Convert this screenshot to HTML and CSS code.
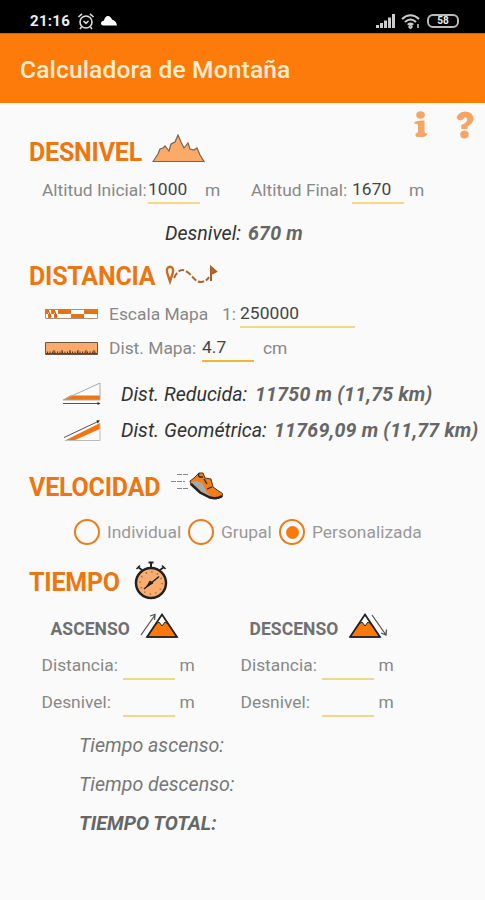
FILE: index.html
```html
<!DOCTYPE html>
<html lang="es">
<head>
    <meta charset="UTF-8">
    <title>Calculadora de Montaña</title>
    <link rel="stylesheet" href="styles.css">
</head>
<body>

<div class="statusbar">
    <span class="clock">21:16</span>
    <svg class="alarm" width="18" height="18" viewBox="0 0 18 18" fill="none" stroke="#ddd" stroke-width="1.6">
        <circle cx="9" cy="10" r="6"/>
        <path d="M1.5 5L5 1.8M16.500 5L13 1.800M6.500 9L9 11.300L11.500 9M4.500 15L3 17M13.500 15L15 17"/>
    </svg>
    <svg class="cloud" width="16" height="10" viewBox="0 0 16 10" fill="#fff">
        <path d="M2.500 9.500Q0 9.500 0 7.500Q0 5 3 4.500Q4 0 7 0Q9.500 0 11 3.500Q15.500 5 16 9.500Z"/>
    </svg>
    <svg class="signal" width="20" height="14" viewBox="0 0 20 14" fill="#ccc">
        <path d="M0 11h3v3H0zM4 9h3v5H4zM8 6.500h3V14H8zM12 3.500h3V14h-3zM16 0h3v14h-3z"/>
    </svg>
    <svg class="wifi" width="20" height="15" viewBox="0 0 20 15" fill="none" stroke="#ccc" stroke-width="2">
        <path d="M1 5Q9.500 -2.500 18 5M4 8Q9.500 3 15 8M6.700 10.800Q9.500 8.500 12.300 10.800"/>
        <path d="M9.500 11L11 13L9.500 14.500L8 13Z M17 10v4" stroke-width="1.500"/>
    </svg>
    <span class="battery">58</span>
</div>

<header class="appbar">Calculadora de Montaña</header>

<main>
    <div class="top">
        <h2 class="w-desnivel">DESNIVEL</h2>
        <svg class="ico-range" width="54" height="29" viewBox="0 0 54 29">
            <path d="M1 27.500L6 20L8 15L11 14L13 12L17 17L19 10L23 8L26 1L29 8L32 14L36 9L38 15L42 16L45 14L48 21L52 27.500Z" fill="#fbaa68" stroke="#776450" stroke-width="1.200"/>
        </svg>
        <div class="actions">
            <svg width="14" height="27" viewBox="0 0 14 27" fill="#f7a564">
                <ellipse cx="6.500" cy="4" rx="4.300" ry="3.700"/>
                <path d="M0.500 11Q4 9 10.500 9.500V21Q11 23 13.500 22Q13 26 8 26H3Q1 25.500 1.500 23L4 21V14Q3 12 0.500 13Z"/>
            </svg>
            <svg width="18" height="28" viewBox="0 0 17 28" fill="#f7a564" preserveAspectRatio="none">
                <path d="M0.500 7Q2 0.500 9 0.500Q16.500 1 16.500 8Q16 13 11 15.500V18H5V14Q11 11.500 10.500 8Q9 4.500 6.500 8.500Q3 10.500 0.500 7Z"/>
                <circle cx="8" cy="23.500" r="4"/>
            </svg>
        </div>
    </div>

    <div class="row altitude">
        <span class="label l-inicial">Altitud Inicial:</span>
        <span class="field">1000</span>
        <span class="unit u-first">m</span>
        <span class="label l-final">Altitud Final:</span>
        <span class="field">1670</span>
        <span class="unit">m</span>
    </div>
    <div class="row result r-desnivel"><span class="name">Desnivel:</span><b>670 m</b></div>

    <div class="heading h-distancia">
        <h2 class="w-distancia">DISTANCIA</h2>
        <svg width="54" height="20" viewBox="0 0 54 20" fill="none" stroke="#c86d22">
            <path d="M5 16.500L2.200 8Q1 2 5 1.800Q9 2 7.800 8Z" stroke-width="2.400"/>
            <path d="M9 13Q14 2 21 6C28 10 29 17 36 17Q42 16 44 12" stroke="#a76637" stroke-width="2" stroke-dasharray="6 2"/>
            <path d="M46 16V2L51 6.500L46 9" fill="#c86d22" stroke="#a75f2c" stroke-width="2"/>
        </svg>
    </div>
    <div class="row escala">
        <svg width="53" height="10" viewBox="0 0 53 10">
            <path d="M.500 .500h52v9h-52z" fill="#fff" stroke="#a99282"/>
            <path d="M0 0h3v5H0zM6 0h3v5H6zM3 5h3v4H3zM9 5h3v4H9zM13 0h13v5H13zM26 5h13v4H26zM39 0h14v5H39z" fill="#e77312"/>
            <path d="M3 1l3 7M9 1l3 7" stroke="#bd682e" stroke-width="1.500"/>
        </svg>
        <span class="label l-escala">Escala Mapa</span>
        <span class="label l-uno">1:</span>
        <span class="field wide">250000</span>
    </div>
    <div class="row mapa">
        <svg width="53" height="13" viewBox="0 0 53 13">
            <path d="M.500 .500h52v12h-52z" fill="#fcaa6b" stroke="#6b5545"/>
            <path d="M2 10.500h50" stroke="#53351f" stroke-width="2" stroke-dasharray="1 1.500"/>
            <path d="M1 11.500h51" stroke="#71421f"/>
            <path d="M9 8v3M17 8v3M25 8v3M33 8v3M41 8v3M49 8v3" stroke="#53351f"/>
        </svg>
        <span class="label l-mapa">Dist. Mapa:</span>
        <span class="field strong">4.7</span>
        <span class="unit u-cm">cm</span>
    </div>
    <div class="row result r-reducida">
        <svg width="40" height="24" viewBox="0 0 40 24" fill="none">
            <path d="M1 18L8 13.500H38V18Z" fill="#ed7712"/>
            <path d="M1 18L38 1V18Z" stroke="#aaa"/>
            <path d="M1 21.500H37" stroke="#555"/>
            <path d="M35.500 20L38.500 21.500L35.500 23Z" fill="#222"/>
        </svg>
        <span class="name n-reducida">Dist. Reducida:</span><b>11750 m (11,75 km)</b>
    </div>
    <div class="row result r-geometrica">
        <svg width="40" height="24" viewBox="0 0 40 24" fill="none">
            <path d="M3 21.500L38 4V10L12 21.500Z" fill="#ed7712"/>
            <path d="M3 21.500H38V4" stroke="#bbb"/>
            <path d="M2 18.500L36 2.500" stroke="#555"/>
            <path d="M34.500 1.200L38 1.500L35.500 4.500Z" fill="#222"/>
        </svg>
        <span class="name n-geometrica">Dist. Geométrica:</span><b>11769,09 m (11,77 km)</b>
    </div>

    <div class="heading h-velocidad">
        <h2 class="w-velocidad">VELOCIDAD</h2>
        <svg width="53" height="30" viewBox="0 0 53 30">
            <path d="M6 3.500H18M0 10.500H14M6 17.500H18" stroke="#888" stroke-dasharray="5 1"/>
            <path d="M19 10L23 7L28 2L32 2L34 7L40 8L42 16L49 21Q53 22 51 26Q46 29 40 27L29 21L20 14Z" fill="#ef7f1c" stroke="#4a3322" stroke-width="1"/>
            <path d="M20 11L25 10L31 12L35 20L40 26L29 20Z" fill="#aaa9a5"/>
            <path d="M20 13L29 21.500L39 26.500Q46 28.500 51 25" fill="none" stroke="#222" stroke-width="2.500"/>
            <path d="M28 2Q26 7 32 6M33 8L36 13M36 18L41 16" fill="none" stroke="#292522" stroke-width="1.300"/>
        </svg>
    </div>
    <div class="row radios">
        <span class="radio"></span><span class="option o-individual">Individual</span>
        <span class="radio"></span><span class="option o-grupal">Grupal</span>
        <span class="radio checked"></span><span class="option o-personal">Personalizada</span>
    </div>

    <div class="heading h-tiempo">
        <h2 class="w-tiempo">TIEMPO</h2>
        <svg width="34" height="40" viewBox="0 0 34 40" fill="none" stroke="#222">
            <circle cx="17" cy="22" r="15" fill="#fbad70" stroke-width="2.500"/>
            <circle cx="17" cy="22" r="11" stroke="#8c6342" stroke-width="1.500" stroke-dasharray="1.200 4.560"/>
            <path d="M17 7V1M14.500 1.500H19.500" stroke-width="2"/>
            <path d="M4 6L8 9M2.500 8L6 4.500M30 6L26 9M31.500 8L28 4.500" stroke-width="1.600"/>
            <path d="M10 28L25 15.500" stroke-width="1.500"/>
            <path d="M12.500 26L16 20L19 22Z" fill="#222"/>
        </svg>
    </div>

    <div class="columns">
        <section class="ascenso">
            <div class="subhead">
                <h3>ASCENSO</h3>
                <svg width="39" height="26" viewBox="0 0 39 26" fill="none" stroke="#222">
                    <path d="M7 24L22 1.500L37 24Z" fill="#fff"/>
                    <path d="M7 24L16 11L19 9L22 13L25 9L28 11L37 24Z" fill="#fb790b"/>
                    <path d="M7 24L22 1.500L37 24Z" stroke-width="1.700"/>
                    <path d="M1 22L15 2M10 3L15 1.500L14.500 7" stroke="#555" stroke-width="1.300"/>
                </svg>
            </div>
            <div class="row entry"><span class="label">Distancia:</span><span class="field thin"></span><span class="unit">m</span></div>
            <div class="row entry"><span class="label">Desnivel:</span><span class="field thin"></span><span class="unit">m</span></div>
        </section>
        <section class="descenso">
            <div class="subhead">
                <h3>DESCENSO</h3>
                <svg width="39" height="26" viewBox="0 0 39 26" fill="none" stroke="#222">
                    <path d="M1 24L16 1.500L31 24Z" fill="#fff"/>
                    <path d="M1 24L10 11L13 9L16 13L19 9L22 11L31 24Z" fill="#fb790b"/>
                    <path d="M1 24L16 1.500L31 24Z" stroke-width="1.700"/>
                    <path d="M23 2L37 22M32 20L37 22L37.500 16.500" stroke="#555" stroke-width="1.300"/>
                </svg>
            </div>
            <div class="row entry"><span class="label">Distancia:</span><span class="field thin"></span><span class="unit">m</span></div>
            <div class="row entry"><span class="label">Desnivel:</span><span class="field thin"></span><span class="unit">m</span></div>
        </section>
    </div>

    <div class="totals">
        <p class="t-ascenso">Tiempo ascenso:</p>
        <p class="t-descenso">Tiempo descenso:</p>
        <p class="total">TIEMPO TOTAL:</p>
    </div>
</main>

</body>
</html>
```
FILE: styles.css
```css
* {
    box-sizing: border-box;
}
body {
    margin: 0;
    height: 900px;
    overflow: hidden;
    background: #fafafa;
    font-family: Roboto, sans-serif;
    font-size: 17.4px;
    color: #888;
    white-space: nowrap;
}
svg {
    display: block;
    flex: none;
}
h2, h3, p {
    margin: 0;
}
.statusbar {
    display: flex;
    align-items: center;
    height: 33px;
    padding: 9px 26px 0 30px;
    background: #000;
    color: #eee;
}
.clock {
    width: 47px;
    font-size: 15px;
    font-weight: 700;
    letter-spacing: 0.3px;
}
.cloud {
    margin-left: 6px;
}
.signal {
    margin-left: auto;
}
.wifi {
    margin: 0 6px 0 5px;
}
.battery {
    width: 32px;
    height: 14px;
    border: 2px solid #bbb;
    border-radius: 6px;
    font-size: 10px;
    font-weight: 700;
    line-height: 10px;
    text-align: center;
}
.appbar {
    height: 70px;
    padding-left: 20px;
    background: #fd7b0b;
    border-top: 1px solid #ca650d;
    color: #ffecd0;
    font-size: 24.5px;
    font-weight: 500;
    line-height: 71px;
    letter-spacing: 0.17px;
}
.top {
    display: flex;
    height: 65px;
    padding-left: 29px;
    align-items: flex-end;
}
h2 {
    padding-top: 2px;
    color: #ec7610;
    font-size: 25px;
    font-weight: 700;
    line-height: 31px;
    letter-spacing: -0.2px;
}
.ico-range {
    margin-bottom: 5px;
}
.actions {
    display: flex;
    align-self: flex-start;
    gap: 28px;
    margin: 8px 11px 0 auto;
}
.w-desnivel { width: 123px; }
.w-distancia { width: 136px; }
.w-velocidad { width: 142px; }
.w-tiempo { width: 105px; }
.row, .heading {
    display: flex;
    align-items: center;
}
.heading {
    height: 38px;
    padding-left: 29px;
}
.altitude {
    height: 44px;
    padding-left: 42px;
}
.label, .unit, .field {
    flex: none;
    line-height: 27px;
}
.l-inicial { width: 106px; }
.l-final { width: 101px; }
.field {
    width: 52px;
    height: 28px;
    border-bottom: 2px solid #f8d58c;
    color: #444;
    letter-spacing: 0.1px;
}
.unit {
    padding-left: 5px;
}
.u-first { width: 51px; }
.field.strong {
    border-color: #f1b735;
}
.field.thin {
    border-bottom: 2px solid #f1d68d;
}
.field.wide {
    width: 115px;
}
.result {
    color: #333;
    font-size: 19.6px;
    font-style: italic;
}
.result b {
    color: #666;
    letter-spacing: 0.2px;
}
.r-desnivel {
    height: 44px;
    padding: 0 0 1px 165px;
}
.r-desnivel .name { width: 83px; }
.escala {
    height: 40px;
    padding-left: 45px;
}
.l-escala {
    width: 113px;
    margin-left: 11px;
}
.l-uno { width: 18px; }
.mapa {
    height: 28px;
    padding-left: 45px;
}
.l-mapa {
    width: 93px;
    margin-left: 11px;
}
.u-cm { padding-left: 9px; }
.r-reducida {
    height: 36px;
    margin-top: 14px;
    padding-left: 62px;
}
.r-geometrica {
    height: 37px;
    padding-left: 62px;
}
.n-reducida {
    width: 134px;
    margin-left: 19px;
}
.n-geometrica {
    width: 153px;
    margin-left: 19px;
}
.h-velocidad {
    margin-top: 18px;
}
.radios {
    height: 54px;
    padding-left: 74px;
    font-size: 17.4px;
    color: #999;
}
.radio {
    display: flex;
    flex: none;
    width: 26px;
    height: 26px;
    border: 2.5px solid #e97c1c;
    border-radius: 50%;
    align-items: center;
    justify-content: center;
}
.radio.checked::before {
    content: "";
    width: 13px;
    height: 13px;
    border-radius: 50%;
    background: #fb790b;
}
.option { padding-left: 7px; }
.o-individual { width: 88px; }
.o-grupal { width: 65px; }
.h-tiempo {
    height: 44px;
}
.columns {
    display: grid;
    grid-template-columns: 199px 199px;
    margin: 8px 0 0 41.5px;
}
.subhead {
    display: flex;
    height: 36px;
    align-items: center;
    padding-left: 9px;
}
.subhead svg {
    margin-bottom: 6px;
}
h3 {
    width: 89px;
    color: #707070;
    font-size: 17.5px;
    font-weight: 700;
    letter-spacing: 0.05px;
}
.descenso h3 { width: 99px; }
.entry {
    height: 37px;
}
.entry .label { width: 81px; }
.totals {
    margin: 5px 0 0 79px;
    color: #777;
    font-size: 19.6px;
    font-style: italic;
    line-height: 39px;
}
.total {
    color: #666;
    font-weight: 700;
}
```
